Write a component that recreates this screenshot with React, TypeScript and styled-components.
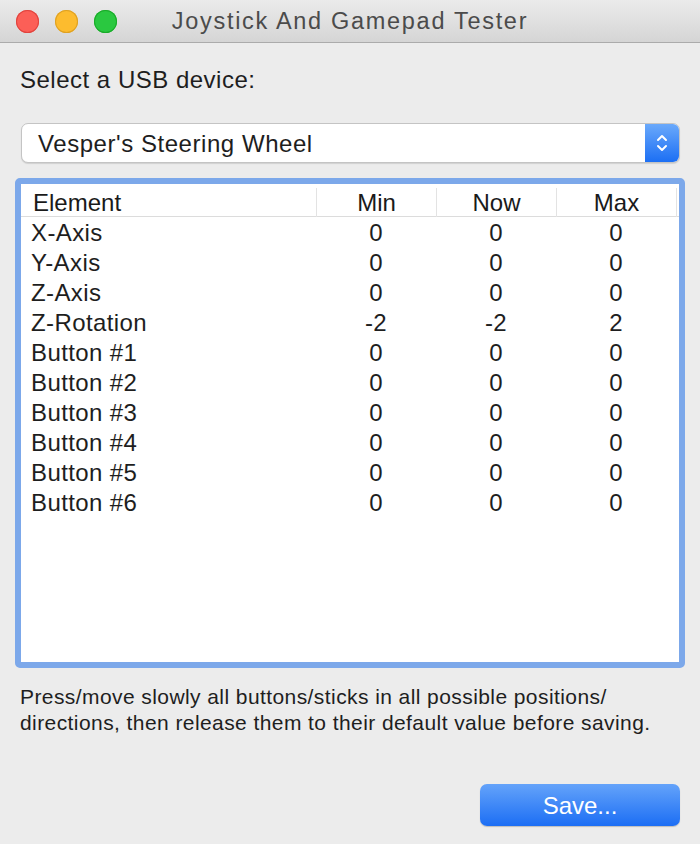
import styled, { createGlobalStyle } from "styled-components";

const GlobalStyle = createGlobalStyle`
  html, body {
    margin: 0;
    padding: 0;
    background: #ececec;
  }
  body {
    font-family: "Liberation Sans", Arial, sans-serif;
    color: #1e1e1e;
  }
`;

const Window = styled.div`
  width: 700px;
  height: 844px;
  display: flex;
  flex-direction: column;
  background: #ececec;
  overflow: hidden;
`;

const TitleBar = styled.header`
  height: 42px;
  flex: none;
  display: flex;
  align-items: center;
  position: relative;
  background: linear-gradient(#ebebeb, #d5d5d5);
  border-bottom: 1px solid #ababab;
`;

const Lights = styled.div`
  display: flex;
  gap: 16px;
  padding-left: 16px;
`;

const Light = styled.span<{ color: string; edge: string }>`
  width: 23px;
  height: 23px;
  border-radius: 50%;
  background: ${(p) => p.color};
  box-shadow: inset 0 0 0 1px ${(p) => p.edge};
`;

const Title = styled.h1`
  position: absolute;
  left: 0;
  right: 0;
  margin: 0;
  text-align: center;
  font-size: 23.5px;
  letter-spacing: 1.7px;
  font-weight: normal;
  color: #4b4b4b;
  pointer-events: none;
`;

const Content = styled.main`
  flex: 1;
  display: flex;
  flex-direction: column;
  padding: 24px 20px 18px 20px;
`;

const Label = styled.div`
  font-size: 24px;
  line-height: 26px;
  letter-spacing: 0.5px;
`;

const Popup = styled.div`
  margin-top: 30px;
  margin-left: 1px;
  height: 40px;
  display: flex;
  align-items: stretch;
  background: #fff;
  border: 1px solid #c4c4c4;
  border-radius: 7px;
  box-shadow: 0 1px 1px rgba(0, 0, 0, 0.12);
  box-sizing: border-box;
  overflow: hidden;
`;

const PopupText = styled.span`
  flex: 1;
  display: flex;
  align-items: center;
  padding: 2px 0 0 16px;
  font-size: 24px;
  letter-spacing: 0.55px;
`;

const Stepper = styled.span`
  width: 34px;
  display: flex;
  align-items: center;
  justify-content: center;
  background: linear-gradient(#6aa9fb, #1c6ff4);
`;

const TableFrame = styled.div`
  margin: 15px -5px 0 -5px;
  height: 490px;
  box-sizing: border-box;
  border: 6px solid #7ca8ea;
  border-radius: 5px;
  background: #fff;
  display: flex;
  flex-direction: column;
`;

const Grid = styled.div`
  display: grid;
  grid-template-columns: 295px 120px 120px 120px;
`;

const HeaderRow = styled(Grid)`
  height: 32px;
  border-bottom: 1px solid #dcdcdc;
  padding-left: 1px;
`;

const HeadCell = styled.div<{ first?: boolean }>`
  display: flex;
  align-items: center;
  justify-content: ${(p) => (p.first ? "flex-start" : "center")};
  padding-left: ${(p) => (p.first ? "11px" : "0")};
  padding-top: 1px;
  font-size: 24px;
  color: #1a1a1a;
  margin: 4px 0 5px 0;
  border-right: 1px solid #e3e3e3;
`;

const Row = styled(Grid)`
  height: 30px;
`;

const Cell = styled.div<{ first?: boolean }>`
  display: flex;
  align-items: center;
  justify-content: ${(p) => (p.first ? "flex-start" : "center")};
  padding-left: ${(p) => (p.first ? "10px" : "0")};
  padding-top: 2px;
  font-size: 24px;
  letter-spacing: 0.4px;
  color: #1e1e1e;
`;

const Note = styled.p`
  margin: 16px 0 0 0;
  font-size: 21px;
  line-height: 26px;
  letter-spacing: 0.42px;
  color: #1e1e1e;
`;

const Footer = styled.div`
  margin-top: auto;
  display: flex;
  justify-content: flex-end;
`;

const SaveButton = styled.button`
  width: 200px;
  height: 42px;
  border: none;
  border-radius: 7px;
  background: linear-gradient(#64a3fa, #1c6ef4);
  box-shadow: 0 1px 1px rgba(0, 0, 0, 0.2);
  color: #fff;
  font-family: "Liberation Sans", Arial, sans-serif;
  font-size: 24px;
  padding-top: 2px;
`;

const rows: [string, number, number, number][] = [
  ["X-Axis", 0, 0, 0],
  ["Y-Axis", 0, 0, 0],
  ["Z-Axis", 0, 0, 0],
  ["Z-Rotation", -2, -2, 2],
  ["Button #1", 0, 0, 0],
  ["Button #2", 0, 0, 0],
  ["Button #3", 0, 0, 0],
  ["Button #4", 0, 0, 0],
  ["Button #5", 0, 0, 0],
  ["Button #6", 0, 0, 0],
];

const App = () => {
  return (
    <Window>
      <GlobalStyle />
      <TitleBar>
        <Lights>
          <Light color="#fc5f57" edge="#e0443e" />
          <Light color="#fdbc2e" edge="#dea123" />
          <Light color="#2ac840" edge="#1aab29" />
        </Lights>
        <Title>Joystick And Gamepad Tester</Title>
      </TitleBar>
      <Content>
        <Label>Select a USB device:</Label>
        <Popup>
          <PopupText>Vesper's Steering Wheel</PopupText>
          <Stepper>
            <svg width="14" height="22" viewBox="0 0 14 22" fill="none">
              <path
                d="M3 8 L7 4 L11 8 M3 14 L7 18 L11 14"
                stroke="#fff"
                strokeWidth="2"
                strokeLinecap="round"
                strokeLinejoin="round"
              />
            </svg>
          </Stepper>
        </Popup>
        <TableFrame>
          <HeaderRow>
            <HeadCell first>Element</HeadCell>
            <HeadCell>Min</HeadCell>
            <HeadCell>Now</HeadCell>
            <HeadCell>Max</HeadCell>
          </HeaderRow>
          {rows.map(([name, min, now, max]) => (
            <Row key={name}>
              <Cell first>{name}</Cell>
              <Cell>{min}</Cell>
              <Cell>{now}</Cell>
              <Cell>{max}</Cell>
            </Row>
          ))}
        </TableFrame>
        <Note>
          Press/move slowly all buttons/sticks in all possible positions/
          <br />
          directions, then release them to their default value before saving.
        </Note>
        <Footer>
          <SaveButton>Save...</SaveButton>
        </Footer>
      </Content>
    </Window>
  );
};

export default App;
